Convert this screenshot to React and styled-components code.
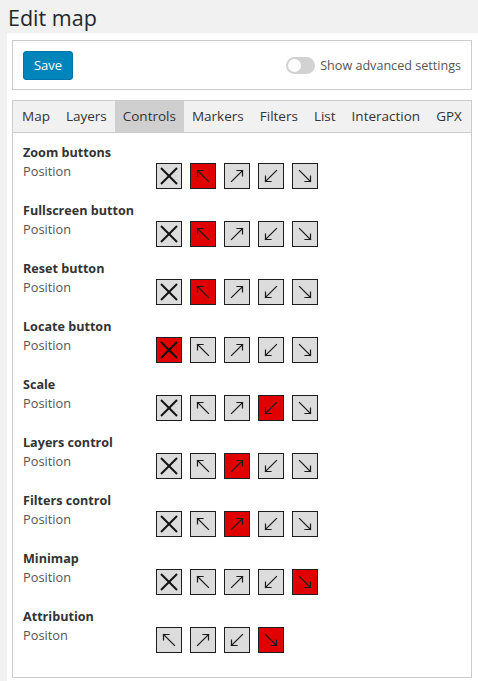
import React from "react";
import styled, { createGlobalStyle, css } from "styled-components";

const GlobalStyle = createGlobalStyle`
  html, body { margin: 0; padding: 0; background: #f1f1f1; }
  body { font-family: "Open Sans", "Noto Sans", sans-serif; color: #444; }
  * { box-sizing: border-box; }
`;

const Heading = styled.h1`
  margin: 0;
  padding: 3px 8px 1px;
  font-size: 21.5px;
  line-height: 29px;
  font-weight: 400;
  color: #23282d;
`;

const Panel = styled.div`
  margin-left: 7px;
  background: #fff;
  padding: 7px 6px 4px 5px;
`;

const Toolbar = styled.div`
  height: 50px;
  border: 1px solid #ccc;
  display: flex;
  align-items: center;
  justify-content: space-between;
  padding: 0 10px;
`;

const SaveButton = styled.button`
  width: 50px;
  height: 29px;
  border: 1px solid #0073aa;
  border-radius: 3px;
  background: #0085ba;
  color: #fff;
  font-family: inherit;
  font-size: 13px;
  padding: 0;
  cursor: pointer;
`;

const ToggleWrap = styled.label`
  display: flex;
  align-items: center;
  gap: 5px;
  font-size: 12.6px;
  color: #555;
`;

const Track = styled.span`
  position: relative;
  width: 29px;
  height: 17px;
  border-radius: 9px;
  background: #d2d2d2;
  display: inline-block;
`;

const Knob = styled.span`
  position: absolute;
  left: 2px;
  top: 2px;
  width: 13px;
  height: 13px;
  border-radius: 50%;
  background: #fff;
`;

const TabBox = styled.div`
  margin-top: 10px;
  border: 1px solid #ccc;
`;

const TabBar = styled.div`
  display: flex;
  background: #f1f1f1;
  border-bottom: 1px solid #ccc;
  padding-left: 1px;
`;

const Tab = styled.div`
  padding: 0 8px;
  height: 31px;
  line-height: 31px;
  font-size: 13.5px;
  color: #333;
  ${(p) =>
    p.$active &&
    css`
      background: #cfcfcf;
    `}
`;

const Content = styled.div`
  padding: 11px 10px 11px;
`;

const Row = styled.div`
  margin-bottom: 13px;
`;

const Title = styled.div`
  font-weight: 700;
  font-size: 12.6px;
  line-height: 18px;
  color: #333;
`;

const Line = styled.div`
  display: flex;
  align-items: flex-start;
`;

const Label = styled.div`
  width: 133px;
  font-size: 12.8px;
  line-height: 18px;
  color: #555;
`;

const Buttons = styled.div`
  display: flex;
  gap: 8px;
  margin-top: 1px;
`;

const PosButton = styled.div`
  width: 26px;
  height: 26px;
  border: 1px solid #1e1e1e;
  background: ${(p) => (p.$active ? "#e00000" : "#dcdcdc")};
  display: flex;
  align-items: center;
  justify-content: center;
`;

const ArrowIcon = ({ dir }) => {
  const rot = { tl: 0, tr: 90, br: 180, bl: 270 }[dir];
  return (
    <svg width="24" height="24" viewBox="0 0 24 24">
      <g transform={`rotate(${rot} 12 12)`} stroke="#1a1a1a" strokeWidth="1.2" fill="none" strokeLinecap="square">
        <line x1="6.5" y1="6.5" x2="17.5" y2="17.5" />
        <polyline points="6.5,12 6.5,6.5 12,6.5" />
      </g>
    </svg>
  );
};

const CrossIcon = () => (
  <svg width="24" height="24" viewBox="0 0 24 24">
    <g stroke="#111" strokeWidth="2" strokeLinecap="butt">
      <line x1="4" y1="4" x2="20" y2="20" />
      <line x1="20" y1="4" x2="4" y2="20" />
    </g>
  </svg>
);

const tabs = ["Map", "Layers", "Controls", "Markers", "Filters", "List", "Interaction", "GPX"];

const controls = [
  { name: "Zoom buttons", label: "Position", active: "tl" },
  { name: "Fullscreen button", label: "Position", active: "tl" },
  { name: "Reset button", label: "Position", active: "tl" },
  { name: "Locate button", label: "Position", active: "none" },
  { name: "Scale", label: "Position", active: "bl" },
  { name: "Layers control", label: "Position", active: "tr" },
  { name: "Filters control", label: "Position", active: "tr" },
  { name: "Minimap", label: "Position", active: "br" },
  { name: "Attribution", label: "Positon", active: "br", noNone: true },
];

export default function App() {
  return (
    <>
      <GlobalStyle />
      <Heading>Edit map</Heading>
      <Panel>
        <Toolbar>
          <SaveButton>Save</SaveButton>
          <ToggleWrap>
            <Track>
              <Knob />
            </Track>
            Show advanced settings
          </ToggleWrap>
        </Toolbar>
        <TabBox>
          <TabBar>
            {tabs.map((t) => (
              <Tab key={t} $active={t === "Controls"}>
                {t}
              </Tab>
            ))}
          </TabBar>
          <Content>
            {controls.map((c) => {
              const opts = c.noNone ? ["tl", "tr", "bl", "br"] : ["none", "tl", "tr", "bl", "br"];
              return (
                <Row key={c.name}>
                  <Title>{c.name}</Title>
                  <Line>
                    <Label>{c.label}</Label>
                    <Buttons>
                      {opts.map((o) => (
                        <PosButton key={o} $active={o === c.active}>
                          {o === "none" ? <CrossIcon /> : <ArrowIcon dir={o} />}
                        </PosButton>
                      ))}
                    </Buttons>
                  </Line>
                </Row>
              );
            })}
          </Content>
        </TabBox>
      </Panel>
    </>
  );
}
